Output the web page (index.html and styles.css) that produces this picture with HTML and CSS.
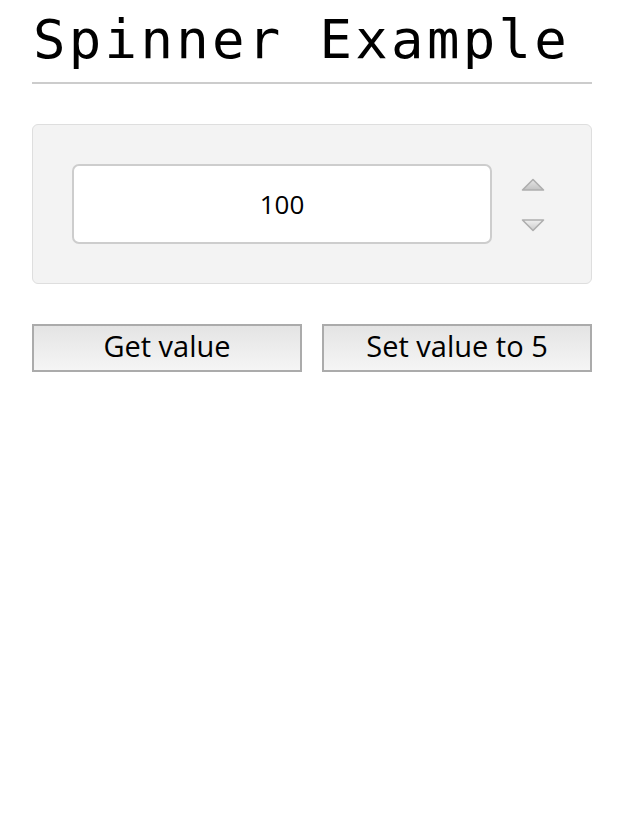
FILE: index.html
```html
<!DOCTYPE html>
<html>
<head>
<meta charset="utf-8">
<title>Spinner Example</title>
<link rel="stylesheet" href="styles.css">
</head>
<body>
<div class="page">
  <h1 class="title">Spinner Example</h1>
  <div class="spinner-box">
    <input class="spinner-input" type="text" value="100">
    <div class="spinner-arrows">
      <svg class="arrow" width="24" height="14" viewBox="0 0 24 14">
        <defs>
          <linearGradient id="gu" x1="0" y1="0" x2="0" y2="1">
            <stop offset="0" stop-color="#e6e6e6"/>
            <stop offset="1" stop-color="#c2c2c2"/>
          </linearGradient>
        </defs>
        <polygon points="12,1.5 22.5,12 1.5,12" fill="url(#gu)" stroke="#aeaeae" stroke-width="1.6" stroke-linejoin="round"/>
      </svg>
      <svg class="arrow" width="24" height="14" viewBox="0 0 24 14">
        <defs>
          <linearGradient id="gd" x1="0" y1="0" x2="0" y2="1">
            <stop offset="0" stop-color="#f0f0f0"/>
            <stop offset="1" stop-color="#cbcbcb"/>
          </linearGradient>
        </defs>
        <polygon points="1.5,2 22.5,2 12,12.5" fill="url(#gd)" stroke="#aeaeae" stroke-width="1.6" stroke-linejoin="round"/>
      </svg>
    </div>
  </div>
  <div class="actions">
    <button class="btn" type="button">Get value</button>
    <button class="btn" type="button">Set value to 5</button>
  </div>
</div>
</body>
</html>
```

FILE: styles.css
```css
html, body {
  margin: 0;
  padding: 0;
  background: #ffffff;
}

.page {
  width: 560px;
  margin-left: 32px;
}

.title {
  font-family: "DejaVu Sans Mono", monospace;
  font-size: 54px;
  letter-spacing: 3.3px;
  font-weight: normal;
  line-height: 68px;
  color: #000;
  margin: 6px 0 0 0;
  padding: 0 0 8px 1px;
  border-bottom: 2px solid #cccccc;
}

.spinner-box {
  margin-top: 40px;
  height: 158px;
  border: 1px solid #dedede;
  border-radius: 6px;
  background: #f3f3f3;
  display: flex;
  align-items: center;
  padding: 0 39px;
  gap: 29px;
}

.spinner-input {
  box-sizing: border-box;
  width: 420px;
  height: 80px;
  border: 2px solid #cdcdcd;
  border-radius: 7px;
  background: #ffffff;
  font-family: "Open Sans", sans-serif;
  font-size: 26px;
  color: #000;
  text-align: center;
  padding: 0;
  outline: none;
}

.spinner-arrows {
  display: flex;
  flex-direction: column;
  gap: 26px;
  margin-top: 2px;
}

.arrow {
  display: block;
}

.actions {
  display: flex;
  gap: 20px;
  margin-top: 40px;
}

.btn {
  box-sizing: border-box;
  flex: 1;
  height: 48px;
  border: 2px solid #ababab;
  border-radius: 0;
  background: linear-gradient(#e4e4e4, #f5f5f5);
  font-family: "Open Sans", sans-serif;
  font-size: 29px;
  color: #000;
  padding: 0 0 14px 0;
  cursor: pointer;
}
```
